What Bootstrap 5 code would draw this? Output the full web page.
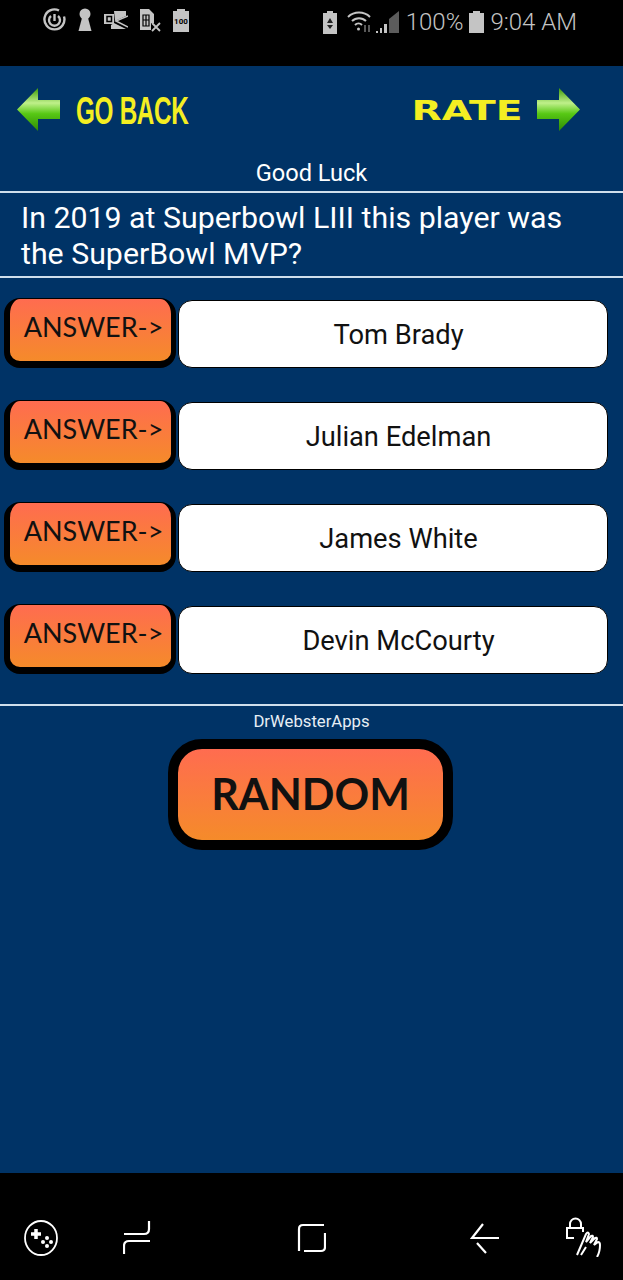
<!DOCTYPE html>
<html lang="en">
<head>
    <meta charset="UTF-8">
    <title>Trivia</title>
    <link href="https://cdn.jsdelivr.net/npm/bootstrap@5.3.0/dist/css/bootstrap.min.css" rel="stylesheet">
    <style>
        body {
            background-color: #000;
            font-family: Roboto, sans-serif;
            width: 623px;
            height: 1280px;
            overflow: hidden;
        }

        .status-bar { height: 66px; padding: 8px 46px 0 43px; color: #c4c4c4; }
        .status-text { font-size: 24px; line-height: 28px; font-weight: 300; }
        .status-left { gap: 12px; }
        .status-right { gap: 6px; }

        .game-screen { background-color: #003366; height: 1107px; }

        .top-links { height: 90px; padding: 0 43px 4px 17px; }
        .go-back {
            font-family: "Liberation Sans Narrow", "Liberation Sans", sans-serif;
            font-weight: 700;
            font-size: 38px;
            color: #f4ee22;
            transform: scaleX(.64);
            transform-origin: left center;
            margin: 4px 0 0 16px;
            white-space: nowrap;
            letter-spacing: -.5px;
        }
        .rate-text {
            font-family: "DejaVu Sans", sans-serif;
            font-weight: 700;
            font-size: 27px;
            color: #f4ee22;
            transform: scaleX(1.45);
            transform-origin: right center;
            margin: 5px 15px 0 0;
        }

        .good-luck { font-size: 23.6px; line-height: 35px; color: #fff; text-align: center; }
        .line-white { height: 2px; background-color: #cfdfec; }
        .question { font-size: 30.3px; line-height: 36px; color: #fff; padding: 7px 21px 4px; }

        .answer-list { padding: 20px 15px 0 4px; }
        .answer-row { height: 70px; margin-bottom: 32px; gap: 2px; }
        .answer-row:last-child { margin-bottom: 30px; }
        .answer-btn {
            width: 172px;
            height: 70px;
            flex-shrink: 0;
            background: linear-gradient(#ff6c50, #f58b2a);
            border: solid #000;
            border-width: 1px 5px 7px 6px;
            border-radius: 16px;
            padding-left: 6px;
            font-family: "Lato", sans-serif;
            font-size: 27px;
            color: #111;
            line-height: 56px;
            text-align: center;
            white-space: nowrap;
        }
        .answer-text {
            margin-top: 2px;
            height: 68px;
            padding-left: 11px;
            background-color: #fff;
            border: 1px solid #000;
            border-radius: 14px;
            font-size: 27.3px;
            line-height: 68px;
            color: #111;
            text-align: center;
            flex-grow: 1;
        }

        .credit { font-size: 16.7px; line-height: 18px; color: #e6eef5; text-align: center; margin-top: 7px; }
        .random-btn {
            display: block;
            width: 285px;
            height: 111px;
            margin: 8px auto 0 168px;
            background: linear-gradient(#ff6c50, #f58b2a);
            border: 10px solid #000;
            border-radius: 34px;
            font-family: "Lato", sans-serif;
            font-weight: 700;
            font-size: 43px;
            line-height: 90px;
            color: #111;
            text-align: center;
        }

        .bottom-nav { height: 107px; padding: 47px 0 0 23px; color: #fff; }
    </style>
</head>
<body>
    <div class="status-bar d-flex justify-content-between align-items-start">
        <div class="d-flex align-items-center status-left">
            <svg width="23" height="24" viewBox="0 0 23 24" fill="none" stroke="#c4c4c4" stroke-width="2.400"><path d="M16 2.500a10 10 0 1 0 5 6"/><path d="M8 8a5.500 5.500 0 1 0 7 0"/><path d="M11.500 6v7"/></svg>
            <svg width="14" height="24" viewBox="0 0 14 24" fill="#c4c4c4"><circle cx="7" cy="6" r="5.500"/><path d="M4.500 8h5l4 15H.5z"/></svg>
            <svg width="24" height="19" viewBox="0 0 24 19"><path d="M10 0h12v5l-11 5zM0 3h10v10H0zM10 12l12 6H7v-4z" fill="#c4c4c4"/><path d="M24 5l-12 5 12 6" fill="none" stroke="#c4c4c4" stroke-width="1.500"/><rect x="3" y="5.500" width="4.500" height="5" fill="none" stroke="#000" stroke-width="1.500"/></svg>
            <svg width="21" height="24" viewBox="0 0 21 24"><path d="M0 1h9l5 5v9h-3v7H0z" fill="#c4c4c4"/><path d="M3 7h6v11H3zM6 7v11M3 12h6" fill="none" stroke="#000" stroke-width="1.200"/><path d="M12 15l8 8M20 15l-8 8" stroke="#c4c4c4" stroke-width="1.800"/></svg>
            <svg width="16" height="24" viewBox="0 0 16 24"><path d="M4 1h8v2h4v21H0V3h4z" fill="#c4c4c4"/><text x="8" y="16" font-size="8" font-family="Roboto" font-weight="700" text-anchor="middle" fill="#000">100</text></svg>
        </div>
        <div class="d-flex align-items-center status-right">
            <svg width="14" height="24" viewBox="0 0 14 24"><path d="M4 1h6v2h4v21H0V3h4z" fill="#c4c4c4"/><path d="M7 8l3 5H4zM4 15h6l-3 4z" fill="#222"/></svg>
            <svg class="ms-1" width="26" height="24" viewBox="0 0 26 24" fill="none" stroke="#c4c4c4" stroke-width="2"><path d="M1 7a16 16 0 0 1 22 0M5 11a10 10 0 0 1 14 0M8 15a5 5 0 0 1 7 0"/><circle cx="11.500" cy="19" r="1.500" fill="#c4c4c4" stroke="none"/><path d="M18 15v7M22 15v7" stroke="#777" stroke-width="1.500"/></svg>
            <svg style="margin-left:-4px" width="25" height="24" viewBox="0 0 25 24"><path d="M1 21h2v2H1zM5 18h2v5H5zM9 14h3v9H9z" fill="#c4c4c4"/><path d="M14 9l10-8v22H14z" fill="#5c5c5c"/></svg>
            <span class="status-text">100%</span>
            <svg width="15" height="22" viewBox="0 0 15 22" fill="#c4c4c4"><path d="M4 0h7v2h4v20H0V2h4z"/></svg>
            <span class="status-text">9:04 AM</span>
        </div>
    </div>

    <div class="game-screen">
        <div class="top-links d-flex justify-content-between align-items-center">
            <div class="d-flex align-items-center">
                <svg width="43" height="43" viewBox="0 0 43 43"><defs><linearGradient id="greenL" x1="0" y1="0" x2="0" y2="1"><stop offset="0" stop-color="#3d9c08"/><stop offset=".35" stop-color="#bff08a"/><stop offset=".6" stop-color="#57c814"/><stop offset="1" stop-color="#2f8a05"/></linearGradient></defs><path d="M0 21.500L21 0v12h22v19H21v12z" fill="url(#greenL)"/></svg>
                <span class="go-back">GO BACK</span>
            </div>
            <div class="d-flex align-items-center">
                <span class="rate-text">RATE</span>
                <svg width="43" height="43" viewBox="0 0 43 43"><path d="M43 21.500L22 0v12H0v19h22v12z" fill="url(#greenL)"/></svg>
            </div>
        </div>
        <div class="good-luck">Good Luck</div>
        <div class="line-white"></div>
        <div class="question">In 2019 at Superbowl LIII this player was the SuperBowl MVP?</div>
        <div class="line-white"></div>

        <div class="answer-list">
            <div class="answer-row d-flex">
                <div class="answer-btn">ANSWER-&gt;</div>
                <div class="answer-text">Tom Brady</div>
            </div>
            <div class="answer-row d-flex">
                <div class="answer-btn">ANSWER-&gt;</div>
                <div class="answer-text">Julian Edelman</div>
            </div>
            <div class="answer-row d-flex">
                <div class="answer-btn">ANSWER-&gt;</div>
                <div class="answer-text">James White</div>
            </div>
            <div class="answer-row d-flex">
                <div class="answer-btn">ANSWER-&gt;</div>
                <div class="answer-text">Devin McCourty</div>
            </div>
        </div>

        <div class="line-white"></div>
        <div class="credit">DrWebsterApps</div>
        <div class="random-btn">RANDOM</div>
    </div>

    <div class="bottom-nav d-flex align-items-start">
        <svg width="36" height="36" viewBox="0 0 36 36" fill="none" stroke="#fff" stroke-width="1.800"><ellipse cx="18" cy="18" rx="16" ry="17"/><path d="M13 9v10M8 14h10" stroke-width="3.500"/><g fill="#fff" stroke="none"><circle cx="24" cy="18" r="2"/><circle cx="20" cy="22" r="2"/><circle cx="28" cy="22" r="2"/><circle cx="24" cy="26" r="2"/></g></svg>
        <svg style="margin-left:64px" width="28" height="34" viewBox="0 0 28 34" fill="none" stroke="#fff" stroke-width="2.200"><path d="M1 14h20q5 0 5-5V1M27 21H6q-5 0-5 5v8"/></svg>
        <svg style="margin-left:146px;margin-top:3px" width="29" height="30" viewBox="0 0 29 30" fill="none" stroke="#fff" stroke-width="2.200"><path d="M27 2H6Q2 2 2 6v22M7 28h17q4 0 4-4V10"/></svg>
        <svg style="margin-left:144px;margin-top:3px" width="30" height="31" viewBox="0 0 30 31" fill="none" stroke="#fff" stroke-width="2.200"><path d="M13 1L2 15h27M7 20l9 10"/></svg>
        <svg style="margin-left:65px;margin-top:-3px" width="40" height="40" viewBox="0 0 40 40" fill="none" stroke="#fff" stroke-width="2"><path d="M5 11V7a5.500 5.500 0 0 1 11 0v4M9 21H2V11h16v4"/><path d="M12 38l9-21q2-3 3 0l-3 8 5-6q2-1 2 1l-3 6 5-5q2-1 2 1l-3 6 4-3q2 0 2 3 0 7-3 12M16 38l5-8" stroke-width="2"/></svg>
    </div>

    <script src="https://cdn.jsdelivr.net/npm/bootstrap@5.3.0/dist/js/bootstrap.bundle.min.js"></script>
</body>
</html>
